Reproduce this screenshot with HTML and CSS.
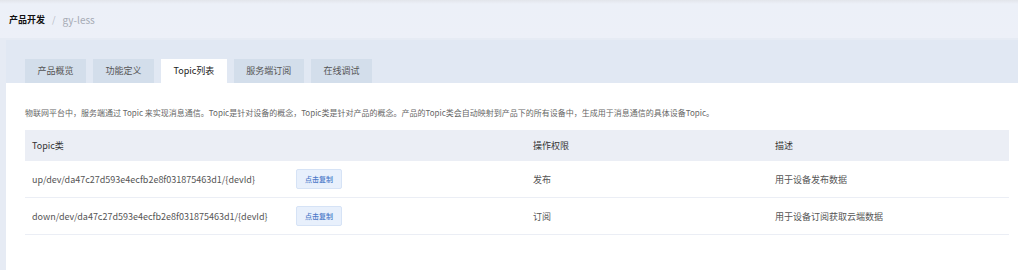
FILE: index.html
```
<!DOCTYPE html>
<html lang="zh-CN">
<head>
    <meta charset="UTF-8">
    <meta name="viewport" content="width=device-width, initial-scale=1.0">
    <title>Topic列表</title>
    <link rel="stylesheet" href="styles.css">
</head>
<body>
    <div class="topbar">
        <span class="crumb-main">产品开发</span>
        <span class="crumb-sep">/</span>
        <span class="crumb-sub">gy-less</span>
    </div>

    <div class="page">
        <div class="panel">
            <div class="tabs">
                <div class="tab">产品概览</div>
                <div class="tab">功能定义</div>
                <div class="tab active">Topic列表</div>
                <div class="tab">服务端订阅</div>
                <div class="tab">在线调试</div>
            </div>

            <div class="content">
                <p class="intro">物联网平台中，服务端通过 Topic 来实现消息通信。Topic是针对设备的概念，Topic类是针对产品的概念。产品的Topic类会自动映射到产品下的所有设备中，生成用于消息通信的具体设备Topic。</p>

                <table class="topic-table">
                    <colgroup>
                        <col style="width: 264px">
                        <col style="width: 237px">
                        <col style="width: 242px">
                        <col>
                    </colgroup>
                    <thead>
                        <tr>
                            <th colspan="2">Topic类</th>
                            <th>操作权限</th>
                            <th>描述</th>
                        </tr>
                    </thead>
                    <tbody>
                        <tr>
                            <td>up/dev/da47c27d593e4ecfb2e8f031875463d1/{devId}</td>
                            <td><button class="copy-btn">点击复制</button></td>
                            <td>发布</td>
                            <td>用于设备发布数据</td>
                        </tr>
                        <tr>
                            <td>down/dev/da47c27d593e4ecfb2e8f031875463d1/{devId}</td>
                            <td><button class="copy-btn">点击复制</button></td>
                            <td>订阅</td>
                            <td>用于设备订阅获取云端数据</td>
                        </tr>
                    </tbody>
                </table>
            </div>
        </div>
    </div>
</body>
</html>
```

FILE: styles.css
```
body {
    margin: 0;
    padding: 0;
    font-family: "Noto Sans CJK SC", "Noto Sans", sans-serif;
    background-color: #e6ebf4;
    color: #333;
}

.topbar {
    height: 38px;
    display: flex;
    align-items: center;
    padding-left: 9px;
    background: linear-gradient(to bottom, #e2e5eb 0, #ecf0f8 4px, #edf0f8 100%);
    font-size: 9px;
}

.crumb-main {
    font-weight: bold;
    color: #111;
}

.crumb-sep {
    color: #b5bac4;
    margin: 0 7px;
}

.crumb-sub {
    color: #a6abb5;
    font-size: 10px;
}

.page {
    padding-left: 6px;
    padding-top: 2px;
}

.panel {
    background-color: #e1e8f3;
    min-height: 230px;
}

.tabs {
    display: flex;
    gap: 7px;
    padding: 19px 19px 0;
}

.tab {
    height: 24px;
    line-height: 24px;
    padding: 0 12.5px;
    background-color: #d3deeb;
    font-size: 9px;
    color: #555;
}

.tab.active {
    background-color: #fff;
    color: #222;
}

.content {
    background-color: #fff;
    padding: 24px 9px 36px 19px;
}

.intro {
    margin: 0 0 11px;
    font-size: 8px;
    line-height: 12px;
    color: #666;
}

.topic-table {
    width: 100%;
    border-collapse: collapse;
    table-layout: fixed;
    font-size: 9px;
}

.topic-table th {
    background-color: #ebeef5;
    height: 31px;
    padding: 0 7px;
    text-align: left;
    font-weight: normal;
    color: #333;
}

.topic-table td {
    height: 36px;
    padding: 0 7px;
    border-bottom: 1px solid #ebeef5;
    color: #555;
    white-space: nowrap;
}

.copy-btn {
    width: 46px;
    height: 20px;
    padding: 0;
    border: 1px solid #d6e3f6;
    border-radius: 2px;
    background-color: #e8f0fc;
    color: #4a78c8;
    font-family: inherit;
    font-size: 7px;
    font-weight: 500;
    cursor: pointer;
}
```
